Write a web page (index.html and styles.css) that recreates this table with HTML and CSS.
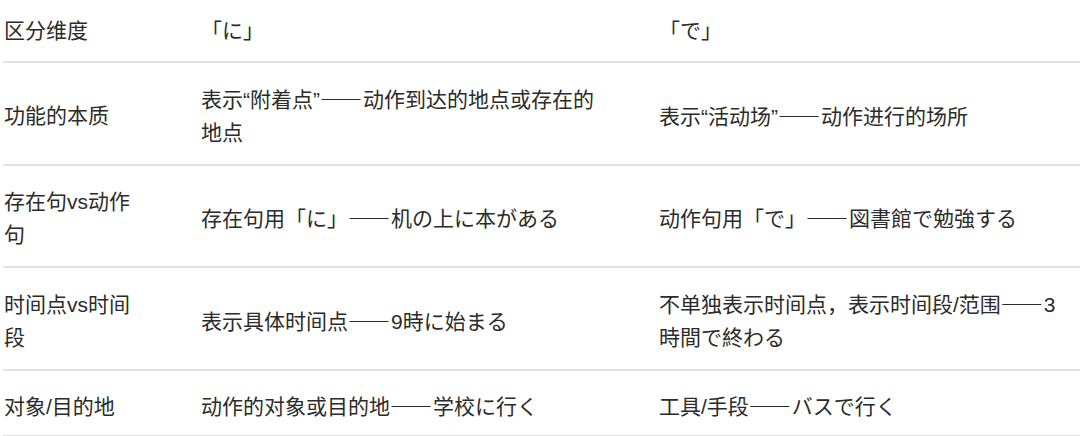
FILE: index.html
```html
<!DOCTYPE html>
<html lang="zh">
<head>
<meta charset="utf-8">
<link rel="stylesheet" href="styles.css">
</head>
<body>
<table class="cmp">
  <colgroup>
    <col class="c1">
    <col class="c2">
    <col class="c3">
  </colgroup>
  <thead>
    <tr>
      <th>区分维度</th>
      <th>「に」</th>
      <th>「で」</th>
    </tr>
  </thead>
  <tbody>
    <tr>
      <td>功能的本质</td>
      <td>表示“附着点”<span class="dash">——</span>动作到达的地点或存在的地点</td>
      <td>表示“活动场”<span class="dash">——</span>动作进行的场所</td>
    </tr>
    <tr>
      <td>存在句vs动作句</td>
      <td>存在句用「に」<span class="dash">——</span>机の上に本がある</td>
      <td>动作句用「で」<span class="dash">——</span>図書館で勉強する</td>
    </tr>
    <tr>
      <td>时间点vs时间段</td>
      <td>表示具体时间点<span class="dash">——</span>9時に始まる</td>
      <td>不单独表示时间点，表示时间段/范围<span class="dash">——</span>3時間で終わる</td>
    </tr>
    <tr class="last">
      <td>对象/目的地</td>
      <td>动作的对象或目的地<span class="dash">——</span>学校に行く</td>
      <td>工具/手段<span class="dash">——</span>バスで行く</td>
    </tr>
  </tbody>
</table>
</body>
</html>
```

FILE: styles.css
```css
html, body {
  margin: 0;
  padding: 0;
  background: #ffffff;
}

body {
  font-family: "Liberation Sans", "Noto Sans CJK SC", sans-serif;
  color: #2b2b2b;
  font-size: 21px;
  line-height: 33px;
}

.dash {
  font-family: "Noto Sans CJK SC", sans-serif;
  letter-spacing: 1px;
}

.cmp {
  margin-left: 3px;
  width: 1077px;
  border-collapse: collapse;
  table-layout: fixed;
}

.c1 { width: 197px; }
.c2 { width: 458px; }
.c3 { width: 422px; }

.cmp th,
.cmp td {
  font-weight: normal;
  text-align: left;
  vertical-align: middle;
  padding: 19px 0 15px 1px;
  border-bottom: 2px solid #e3e3e3;
}

.cmp th:nth-child(1),
.cmp td:nth-child(1) { padding-right: 52px; }

.cmp th:nth-child(2),
.cmp td:nth-child(2) { padding-right: 52px; }

.cmp th:nth-child(3),
.cmp td:nth-child(3) { padding-right: 8px; }

.cmp th {
  padding-top: 14px;
  padding-bottom: 14px;
}

.cmp .last td {
  padding-top: 18px;
  padding-bottom: 12px;
}
```
